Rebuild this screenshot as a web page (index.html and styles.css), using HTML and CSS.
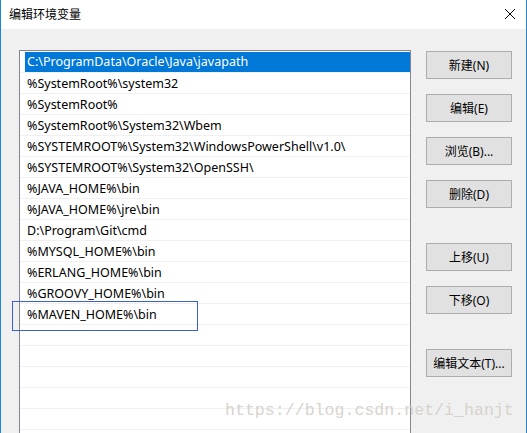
FILE: index.html
```html
<!DOCTYPE html>
<html>
<head>
<meta charset="utf-8">
<link rel="stylesheet" href="styles.css">
</head>
<body>
<div class="window">
  <div class="titlebar">
    <span class="title">编辑环境变量</span>
    <svg class="close" width="12" height="12" viewBox="0 0 12 12"><path d="M1 1 L11 11 M11 1 L1 11" stroke="#000" stroke-width="1" fill="none"/></svg>
  </div>
  <div class="content">
    <div class="list">
      <div class="row selected"><div class="cell">C:\ProgramData\Oracle\Java\javapath</div></div>
      <div class="row"><div class="cell">%SystemRoot%\system32</div></div>
      <div class="row"><div class="cell">%SystemRoot%</div></div>
      <div class="row"><div class="cell">%SystemRoot%\System32\Wbem</div></div>
      <div class="row"><div class="cell">%SYSTEMROOT%\System32\WindowsPowerShell\v1.0\</div></div>
      <div class="row"><div class="cell">%SYSTEMROOT%\System32\OpenSSH\</div></div>
      <div class="row"><div class="cell">%JAVA_HOME%\bin</div></div>
      <div class="row"><div class="cell">%JAVA_HOME%\jre\bin</div></div>
      <div class="row"><div class="cell">D:\Program\Git\cmd</div></div>
      <div class="row"><div class="cell">%MYSQL_HOME%\bin</div></div>
      <div class="row"><div class="cell">%ERLANG_HOME%\bin</div></div>
      <div class="row"><div class="cell">%GROOVY_HOME%\bin</div></div>
      <div class="row"><div class="cell">%MAVEN_HOME%\bin</div></div>
      <div class="row"><div class="cell"></div></div>
      <div class="row"><div class="cell"></div></div>
      <div class="row"><div class="cell"></div></div>
      <div class="row"><div class="cell"></div></div>
      <div class="row"><div class="cell"></div></div>
      <div class="row"><div class="cell"></div></div>
    </div>
    <div class="buttons">
      <div class="btn">新建(N)</div>
      <div class="btn">编辑(E)</div>
      <div class="btn">浏览(B)...</div>
      <div class="btn">删除(D)</div>
      <div class="btn group">上移(U)</div>
      <div class="btn">下移(O)</div>
      <div class="btn group">编辑文本(T)...</div>
    </div>
  </div>
  <div class="mark-box"></div>
  <div class="watermark">https://blog.csdn.net/i_hanjt</div>
</div>
</body>
</html>
```
FILE: styles.css
```css
html, body {
  margin: 0;
  padding: 0;
}
body {
  font-family: "Noto Sans", "Noto Sans CJK SC", sans-serif;
  font-size: 12px;
  color: #000;
}
.window {
  position: relative;
  width: 525px;
  height: 433px;
  border-left: 1px solid #1a85d9;
  border-right: 1px solid #1a85d9;
  background: #f0f0f0;
  overflow: hidden;
}
.titlebar {
  height: 29px;
  background: #fff;
  display: flex;
  align-items: center;
  justify-content: space-between;
  padding: 0 10px 0 8px;
}
.title {
  font-family: "Noto Sans CJK SC", sans-serif;
  font-size: 12px;
  line-height: 16px;
  margin-top: -1px;
}
.close {
  display: block;
  margin-top: -2px;
}
.content {
  display: flex;
  align-items: flex-start;
  padding: 21px 0 0 18px;
  gap: 15px;
}
.list {
  width: 390px;
  height: 400px;
  border: 1px solid #828790;
  border-bottom: none;
  background: #fff;
  padding-top: 1px;
  overflow: hidden;
}
.row {
  height: 20px;
  border-bottom: 1px solid #f0f0f0;
  display: flex;
}
.cell {
  flex: 1;
  margin-left: 5px;
  padding-left: 2px;
  line-height: 21px;
  font-size: 12.5px;
  white-space: nowrap;
}
.selected .cell {
  background: #0078d7;
  color: #fff;
  line-height: 20px;
}
.buttons {
  display: flex;
  flex-direction: column;
  gap: 15px;
  padding-top: 1px;
}
.btn {
  width: 84px;
  height: 26px;
  border: 1px solid #adadad;
  background: #e1e1e1;
  display: flex;
  align-items: center;
  justify-content: center;
  font-family: "Noto Sans", "Noto Sans CJK SC", sans-serif;
  font-size: 12px;
}
.btn.group {
  margin-top: 20px;
}
.mark-box {
  position: absolute;
  left: 11px;
  top: 301px;
  width: 184px;
  height: 28px;
  border: 1px solid #3a5fd6;
}
.watermark {
  position: absolute;
  left: 224px;
  top: 401px;
  font-family: "Liberation Mono", monospace;
  font-size: 16.6px;
  color: #d8d3cd;
  white-space: nowrap;
}
```
